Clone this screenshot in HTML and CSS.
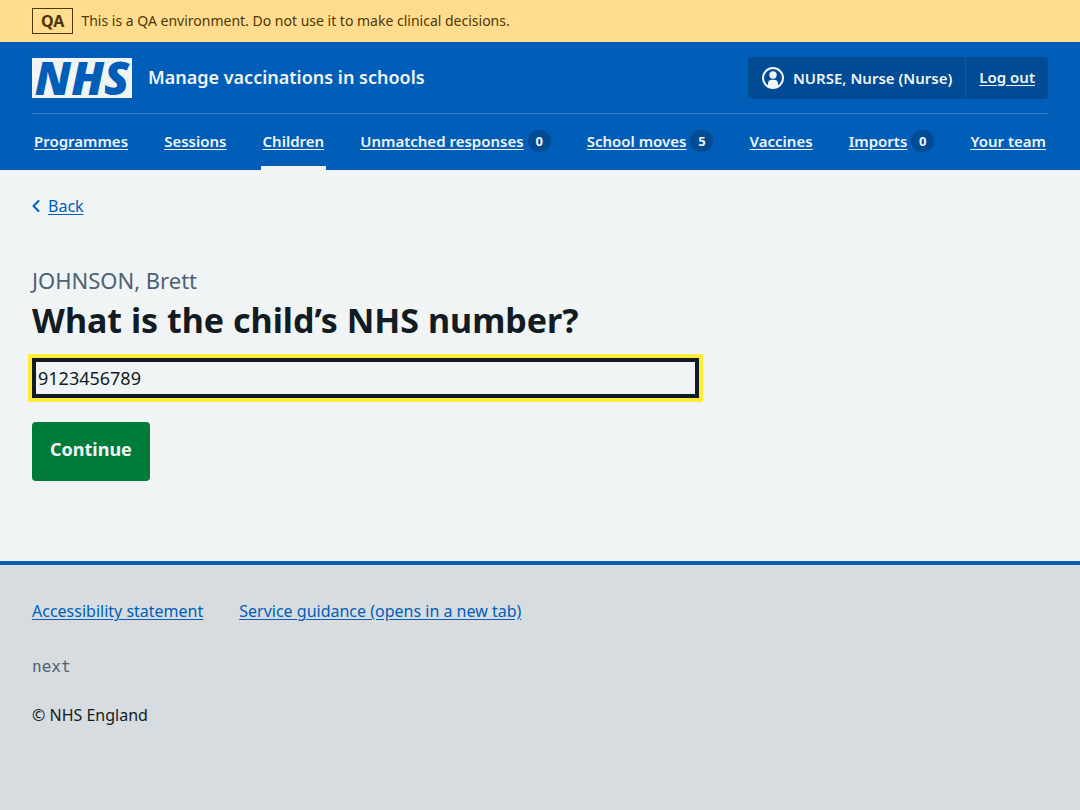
FILE: index.html
```html
<!DOCTYPE html>
<html lang="en">
<head>
<meta charset="utf-8">
<meta name="viewport" content="width=device-width, initial-scale=1">
<title>What is the child’s NHS number? – Manage vaccinations in schools</title>
<link rel="stylesheet" href="styles.css">
</head>
<body>
<div class="environment">
  <div class="container environment-inner">
    <strong class="environment-tag">QA</strong>
    <span>This is a QA environment. Do not use it to make clinical decisions.</span>
  </div>
</div>
<header class="header">
  <div class="container">
    <div class="header-top">
      <div class="service">
        <span class="logo">NHS</span>
        <span class="service-name">Manage vaccinations in schools</span>
      </div>
      <div class="account">
        <span class="account-user">
          <svg class="account-icon" viewBox="0 0 24 24" width="24" height="24" aria-hidden="true">
            <circle cx="12" cy="12" r="10" fill="none" stroke="currentColor" stroke-width="2"/>
            <circle cx="12" cy="9" r="3.700" fill="currentColor"/>
            <path d="M7 21v-3.500c0-2.300 1.400-3.700 3.600-3.700h2.800c2.200 0 3.600 1.400 3.600 3.700V21a10 10 0 0 1-10 0z" fill="currentColor"/>
          </svg>
          NURSE, Nurse (Nurse)
        </span>
        <span class="account-logout"><a href="#">Log out</a></span>
      </div>
    </div>
    <nav aria-label="Menu">
      <ul class="nav">
        <li class="nav-item"><a href="#">Programmes</a></li>
        <li class="nav-item"><a href="#">Sessions</a></li>
        <li class="nav-item nav-item-current"><a href="#" aria-current="true">Children</a></li>
        <li class="nav-item"><a href="#">Unmatched responses</a><span class="count">0</span></li>
        <li class="nav-item"><a href="#">School moves</a><span class="count">5</span></li>
        <li class="nav-item"><a href="#">Vaccines</a></li>
        <li class="nav-item"><a href="#">Imports</a><span class="count">0</span></li>
        <li class="nav-item"><a href="#">Your team</a></li>
      </ul>
    </nav>
  </div>
</header>
<div class="container body">
  <div class="back">
    <svg viewBox="0 0 8 12" width="8" height="12" aria-hidden="true"><path d="M6.500 1L1.500 6l5 5" fill="none" stroke="currentColor" stroke-width="2" stroke-linecap="round" stroke-linejoin="round"/></svg>
    <a href="#">Back</a>
  </div>
  <main>
    <form class="form">
      <h1 class="title"><label for="nhs-number"><span class="caption">JOHNSON, Brett</span>What is the child’s NHS number?</label></h1>
      <input class="input" id="nhs-number" type="text" value="9123456789" autocomplete="off">
      <button class="button" type="button">Continue</button>
    </form>
  </main>
</div>
<footer class="footer">
  <div class="container">
    <ul class="footer-links">
      <li><a href="#">Accessibility statement</a></li>
      <li><a href="#">Service guidance (opens in a new tab)</a></li>
    </ul>
    <p class="version">next</p>
    <p class="copyright">© NHS England</p>
  </div>
</footer>
</body>
</html>
```
FILE: styles.css
```css
* {
  box-sizing: border-box;
}

body {
  margin: 0;
  min-height: 100vh;
  display: flex;
  flex-direction: column;
  background: #f0f4f5;
  color: #121c22;
  font-family: "Noto Sans", "Open Sans", sans-serif;
  font-size: 16px;
  line-height: 24px;
}

a {
  color: #005eb8;
  text-underline-offset: 2px;
}

.container {
  width: 100%;
  max-width: 1080px;
  margin: 0 auto;
  padding: 0 32px;
}

.environment {
  background: #ffdc8e;
  color: #4d3705;
  font-size: 14px;
}

.environment-inner {
  display: flex;
  align-items: center;
  gap: 8px;
  padding-top: 8px;
  padding-bottom: 8px;
}

.environment-tag {
  border: 1px solid currentColor;
  padding: 0 8px;
  font-size: 16px;
  font-weight: 700;
}

.header {
  background: #005eb8;
  color: #f0f4f5;
}

.header a {
  color: inherit;
}

.header-top {
  display: flex;
  flex-wrap: wrap;
  align-items: center;
  justify-content: space-between;
  gap: 8px;
  padding: 15px 0 14px;
  border-bottom: 1px solid #337ec6;
}

.service {
  display: flex;
  align-items: center;
  gap: 16px;
}

.logo {
  width: 100px;
  height: 40px;
  background: #f0f4f5;
  color: #005eb8;
  font-family: "Open Sans", "Noto Sans", sans-serif;
  font-size: 46px;
  font-style: italic;
  font-weight: 800;
  line-height: 38px;
  text-align: center;
}

.service-name {
  padding-bottom: 2px;
  font-size: 18px;
  font-weight: 600;
}

.account {
  display: flex;
  background: #004b93;
  border-radius: 4px;
  font-size: 15px;
  font-weight: 600;
  line-height: 22px;
}

.account-user {
  display: flex;
  align-items: center;
  gap: 8px;
  padding: 9px 13px;
}

.account-logout {
  padding: 9px 13px 11px;
  border-left: 1px solid #005eb8;
}

.nav {
  display: flex;
  flex-wrap: wrap;
  justify-content: space-between;
  margin: 0;
  padding: 0;
  list-style: none;
  font-size: 15px;
  font-weight: 600;
}

.nav-item {
  display: flex;
  align-items: center;
  gap: 4px;
  padding: 15px 2px 13px;
  border-bottom: 4px solid transparent;
}

.nav-item-current {
  border-color: #f0f4f5;
}

.count {
  min-width: 23px;
  border-radius: 12px;
  background: #004b93;
  font-size: 13px;
  font-weight: 700;
  line-height: 22px;
  text-align: center;
}

.body {
  padding-top: 24px;
  padding-bottom: 80px;
}

.back {
  display: flex;
  align-items: center;
  gap: 8px;
  color: #005eb8;
}

.form {
  max-width: 667px;
  padding-top: 46px;
}

.title {
  margin: 0 0 14px;
  font-size: 34px;
  font-weight: 700;
  line-height: 48px;
}

.caption {
  display: block;
  color: #4c6272;
  font-size: 22px;
  font-weight: 400;
  line-height: 32px;
}

.input {
  display: block;
  width: 100%;
  height: 40px;
  margin-bottom: 24px;
  padding: 0 2px;
  border: 4px solid #121c22;
  border-radius: 0;
  outline: 4px solid #ffeb3b;
  background: transparent;
  color: inherit;
  font: inherit;
  font-size: 18px;
}

.button {
  display: block;
  padding: 12px 18px 16px;
  border: 0;
  border-radius: 4px;
  background: #007b3a;
  color: #f0f4f5;
  font: inherit;
  font-size: 18px;
  font-weight: 700;
  line-height: 31px;
}

.footer {
  flex: 1;
  border-top: 4px solid #005eb8;
  background: #d7dce0;
  padding: 34px 0 32px;
}

.footer-links {
  display: flex;
  flex-wrap: wrap;
  gap: 8px 36px;
  margin: 0 0 32px;
  padding: 0;
  list-style: none;
}

.version {
  margin: 0 0 24px;
  color: #4c6272;
  font-family: "DejaVu Sans Mono", monospace;
}

.copyright {
  margin: 0;
}
```
